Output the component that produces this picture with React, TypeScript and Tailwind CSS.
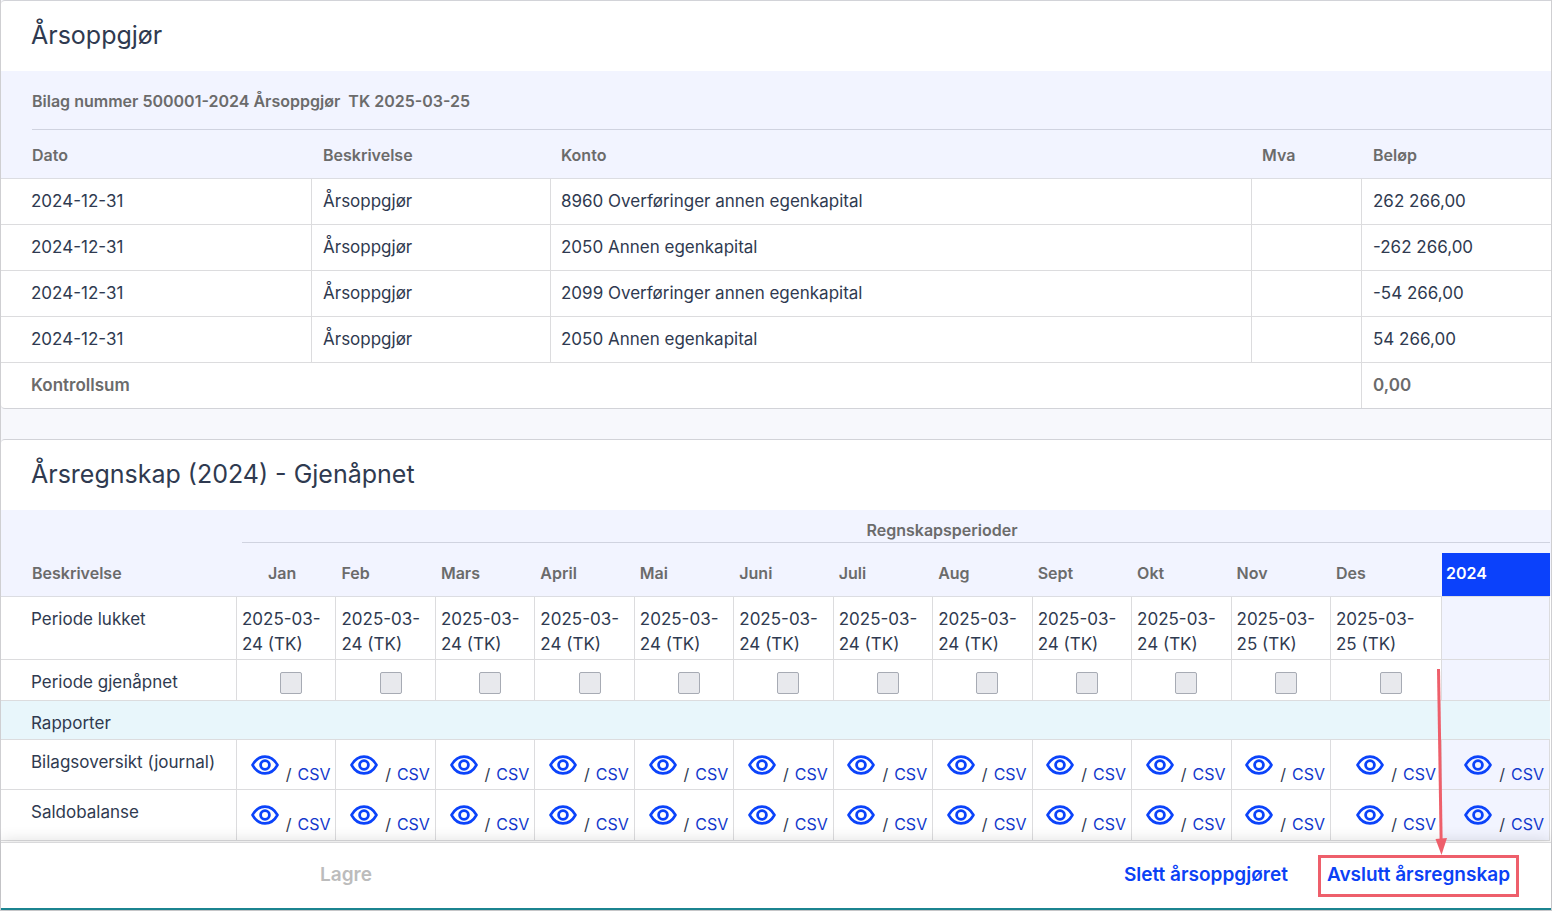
type Entry = {
  date: string;
  description: string;
  account: string;
  amount: string;
};

const entries: Entry[] = [
  {
    date: "2024-12-31",
    description: "Årsoppgjør",
    account: "8960 Overføringer annen egenkapital",
    amount: "262 266,00",
  },
  {
    date: "2024-12-31",
    description: "Årsoppgjør",
    account: "2050 Annen egenkapital",
    amount: "-262 266,00",
  },
  {
    date: "2024-12-31",
    description: "Årsoppgjør",
    account: "2099 Overføringer annen egenkapital",
    amount: "-54 266,00",
  },
  {
    date: "2024-12-31",
    description: "Årsoppgjør",
    account: "2050 Annen egenkapital",
    amount: "54 266,00",
  },
];

const periods = [
  { name: "Jan", month: "2025-03-", day: "24 (TK)" },
  { name: "Feb", month: "2025-03-", day: "24 (TK)" },
  { name: "Mars", month: "2025-03-", day: "24 (TK)" },
  { name: "April", month: "2025-03-", day: "24 (TK)" },
  { name: "Mai", month: "2025-03-", day: "24 (TK)" },
  { name: "Juni", month: "2025-03-", day: "24 (TK)" },
  { name: "Juli", month: "2025-03-", day: "24 (TK)" },
  { name: "Aug", month: "2025-03-", day: "24 (TK)" },
  { name: "Sept", month: "2025-03-", day: "24 (TK)" },
  { name: "Okt", month: "2025-03-", day: "24 (TK)" },
  { name: "Nov", month: "2025-03-", day: "25 (TK)" },
  { name: "Des", month: "2025-03-", day: "25 (TK)" },
];

const reports = ["Bilagsoversikt (journal)", "Saldobalanse"];

function EyeIcon() {
  return (
    <svg viewBox="0 0 28 20" className="h-5 w-7" fill="none" stroke="#0b43fa">
      <path
        d="M1.5 10C4.6 4.4 9 1.6 14 1.6S23.4 4.4 26.5 10C23.4 15.6 19 18.4 14 18.4S4.6 15.6 1.5 10Z"
        strokeWidth="2.6"
        strokeLinejoin="round"
      />
      <circle cx="14" cy="10" r="4.4" strokeWidth="2.8" />
    </svg>
  );
}

function ReportLinks({ label }: { label: string }) {
  return (
    <div className="flex justify-end pr-[5px] text-base leading-6">
      <a href="#vis" aria-label={`Vis ${label}`} className="mt-[15px] mr-[7px]">
        <EyeIcon />
      </a>
      <span className="mt-[22px] mr-1.5">/</span>
      <a href="#csv" className="mt-[22px] text-[#1238cc]">
        CSV
      </a>
    </div>
  );
}

function EntriesCard() {
  return (
    <section className="overflow-hidden rounded-l border-y border-[#d2d3d8] bg-white">
      <h2 className="h-[70px] pt-4 pl-[30px] text-[25px] leading-9">
        Årsoppgjør
      </h2>
      <table className="w-full table-fixed border-separate border-spacing-0 text-left">
        <colgroup>
          <col className="w-[311px]" />
          <col className="w-[239px]" />
          <col />
          <col className="w-[110px]" />
          <col className="w-[189px]" />
        </colgroup>
        <thead className="bg-[#f2f4ff] text-base text-[#6b6b6b]">
          <tr>
            <th colSpan={5} className="h-[59px] p-0 pl-[31px] font-semibold">
              <div className="h-[59px] border-b border-[#d0d3e0] leading-[60px] whitespace-pre">
                Bilag nummer 500001-2024 Årsoppgjør{"  "}TK 2025-03-25
              </div>
            </th>
          </tr>
          <tr className="h-[49px] *:border-b *:border-[#dcdde2] *:pt-0.5 *:pb-0 *:font-semibold">
            <th className="pl-[31px]">Dato</th>
            <th className="pl-[11px]">Beskrivelse</th>
            <th className="pl-2.5">Konto</th>
            <th className="pl-2.5">Mva</th>
            <th className="pl-[11px]">Beløp</th>
          </tr>
        </thead>
        <tbody>
          {entries.map((entry, i) => (
            <tr
              key={i}
              className="h-[46px] *:border-b *:border-[#dcdcde] *:py-0 *:not-last:border-r"
            >
              <td className="pl-[30px]">{entry.date}</td>
              <td className="pl-[11px]">{entry.description}</td>
              <td className="pl-2.5">{entry.account}</td>
              <td />
              <td className="pl-[11px]">{entry.amount}</td>
            </tr>
          ))}
        </tbody>
        <tfoot className="text-[#6b6b6b]">
          <tr className="h-[45px] *:py-0">
            <th
              colSpan={4}
              className="border-r border-[#dcdcde] pl-[30px] font-semibold"
            >
              Kontrollsum
            </th>
            <td className="pl-[11px] font-semibold">0,00</td>
          </tr>
        </tfoot>
      </table>
    </section>
  );
}

function PeriodsCard() {
  return (
    <section className="overflow-hidden rounded-tl border-t border-[#d2d3d8] bg-white">
      <h2 className="h-[70px] pt-4 pl-[30px] text-[25px] leading-9">
        Årsregnskap (2024) - Gjenåpnet
      </h2>
      <div className="bg-[linear-gradient(#f2f4ff_86px,#fff_86px)] pr-px pb-px">
        <table className="w-full table-fixed border-separate border-spacing-0 text-left">
          <colgroup>
            <col className="w-[236px]" />
            {periods.map((p) => (
              <col key={p.name} className={p.name === "Des" ? "w-[111px]" : ""} />
            ))}
            <col className="w-[108px]" />
          </colgroup>
          <thead className="bg-[#f2f4ff] text-base text-[#6b6b6b]">
            <tr>
              <td className="h-[43px] p-0" />
              <th colSpan={13} className="p-0 pl-[5px] align-top font-semibold">
                <div className="h-[33px] border-b border-[#d0d3e0] pt-2 pl-[92px] text-center leading-6">
                  Regnskapsperioder
                </div>
              </th>
            </tr>
            <tr className="h-11 *:border-b *:border-[#dcdde2] *:pt-0 *:pb-[3px] *:font-semibold">
              <th className="pl-[31px]">Beskrivelse</th>
              {periods.map((p) => (
                <th
                  key={p.name}
                  className={p.name === "Jan" ? "pl-[31px]" : "pl-[5px]"}
                >
                  {p.name}
                </th>
              ))}
              <th className="bg-[#0b41fb] pl-1 text-white">2024</th>
            </tr>
          </thead>
          <tbody className="[&_td]:border-r [&_td]:border-b [&_td]:border-[#dcdcde] [&_th]:border-b [&_th]:border-[#dcdcde] [&_th]:font-normal">
            <tr className="h-[63px] align-top leading-[25px]">
              <th className="border-r py-0 pt-2.5 pl-[30px]">Periode lukket</th>
              {periods.map((p) => (
                <td key={p.name} className="p-0 pt-2.5 pl-[5px]">
                  {p.month}
                  <br />
                  {p.day}
                </td>
              ))}
              <td className="bg-[#f2f4ff]" />
            </tr>
            <tr className="h-[41px] align-top leading-6">
              <th className="border-r py-0 pt-2.5 pl-[30px]">
                Periode gjenåpnet
              </th>
              {periods.map((p) => (
                <td key={p.name} className="p-0 pt-3 pl-2.5">
                  <input
                    type="checkbox"
                    disabled
                    aria-label={`Gjenåpne ${p.name}`}
                    className="mx-auto block size-[22px] appearance-none rounded-[2px] border border-[#a7abb4] bg-[#e8e9ed]"
                  />
                </td>
              ))}
              <td className="bg-[#f2f4ff]" />
            </tr>
            <tr className="h-[39px] bg-[#e8f6fb] align-top leading-6">
              <th colSpan={14} className="py-0 pt-2.5 pl-[30px]">
                Rapporter
              </th>
            </tr>
            {reports.map((report) => (
              <tr
                key={report}
                className="h-[50px] align-top leading-6 last:h-[51px]"
              >
                <th className="border-r py-0 pt-2.5 pl-[30px] whitespace-nowrap">
                  {report}
                </th>
                {periods.map((p) => (
                  <td key={p.name} className="p-0">
                    <ReportLinks label={`${report} ${p.name}`} />
                  </td>
                ))}
                <td className="bg-[#f2f4ff] p-0">
                  <ReportLinks label={`${report} 2024`} />
                </td>
              </tr>
            ))}
          </tbody>
        </table>
      </div>
    </section>
  );
}

function ActionBar() {
  return (
    <footer className="relative flex h-[68px] items-center justify-between border-t border-b-2 border-t-[#d9d9db] border-b-[#1b8490] bg-white pr-8 pl-[319px] text-[19px] font-semibold shadow-[0_-2px_14px_rgba(0,0,0,0.12)]">
      <button type="button" disabled className="text-[#bcbcbc]">
        Lagre
      </button>
      <div className="flex items-center gap-[30px] text-[#0b41f5]">
        <button type="button">Slett årsoppgjøret</button>
        <button
          type="button"
          className="relative h-[42px] border-3 border-[#ee5f6b] px-1.5"
        >
          Avslutt årsregnskap
          <svg
            viewBox="0 0 12 186"
            className="absolute right-[69px] bottom-[39px] h-[186px] w-3"
          >
            <path d="M3.5 0 6.2 176" stroke="#ee5f6b" strokeWidth="3" />
            <path d="M0.5 170 12 169 6.5 186Z" fill="#ee5f6b" />
          </svg>
        </button>
      </div>
    </footer>
  );
}

export default function App() {
  return (
    <main className="border-x border-b border-[#cfcfd2] bg-[#f7f8fc] font-[Inter,Roboto,sans-serif] text-[17px] text-[#2f3a50]">
      <div className="flex flex-col gap-[30px]">
        <EntriesCard />
        <PeriodsCard />
      </div>
      <ActionBar />
    </main>
  );
}
